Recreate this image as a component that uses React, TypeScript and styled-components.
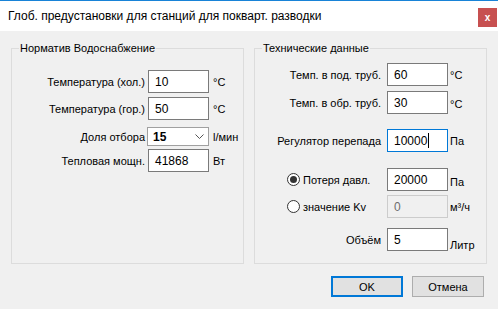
import styled, { createGlobalStyle } from 'styled-components'

const GlobalStyle = createGlobalStyle`
	html, body {
		margin: 0;
		padding: 0;
		background: #f0f0f0;
	}
	body {
		font-family: 'Liberation Sans', Arial, sans-serif;
		font-size: 11px;
		color: #000;
	}
`

const Window = styled.div`
	width: 498px;
	height: 309px;
	box-sizing: border-box;
	border-top: 1px solid #1883d7;
	background: #f0f0f0;
	display: flex;
	flex-direction: column;
	overflow: hidden;
`

const TitleBar = styled.div`
	height: 30px;
	flex: none;
	background: #fff;
	display: flex;
	align-items: flex-start;
	justify-content: space-between;
	padding: 0 1px 0 8px;
`

const Title = styled.span`
	font-size: 12px;
	line-height: 30px;
`

const CloseButton = styled.button`
	width: 19px;
	height: 19px;
	margin-top: 7px;
	padding: 0;
	border: none;
	background: #c75050;
	color: #fff;
	font: bold 10px 'Liberation Sans', Arial, sans-serif;
	line-height: 19px;
`

const Groups = styled.div`
	display: flex;
	gap: 10px;
	padding: 17px 0 0 11px;
`

const Group = styled.section`
	width: 233px;
	height: 216px;
	box-sizing: border-box;
	border: 1px solid #dcdcdc;
`

const Legend = styled.div`
	width: fit-content;
	margin: -7px 0 0 7px;
	padding: 0 1px;
	line-height: 13px;
	background: #f0f0f0;
`

type RowProps = {
	$top: number
	$label: number
	$labelGap: number
	$unitGap: number
}

const Row = styled.div<RowProps>`
	display: grid;
	grid-template-columns: ${(p) => p.$label}px 61px 1fr;
	align-items: center;
	margin-top: ${(p) => p.$top}px;
	> :first-child {
		padding-right: ${(p) => p.$labelGap}px;
	}
	> :last-child {
		padding-left: ${(p) => p.$unitGap}px;
	}
`

const Label = styled.span`
	text-align: right;
	white-space: nowrap;
`

// some units sit a few pixels under the middle of their box
const Unit = styled.span<{ $shift?: number }>`
	white-space: nowrap;
	margin-top: ${(p) => (p.$shift ?? 0) * 2}px;
`

const TextBox = styled.div<{ $focused?: boolean; $disabled?: boolean }>`
	height: 23px;
	box-sizing: border-box;
	display: flex;
	align-items: center;
	padding-left: 6px;
	font-size: 12px;
	background: ${(p) => (p.$disabled ? '#f0f0f0' : '#fff')};
	color: ${(p) => (p.$disabled ? '#6d6d6d' : '#000')};
	border: 1px solid
		${(p) => (p.$focused ? '#0078d7' : p.$disabled ? '#cccccc' : '#7a7a7a')};
`

const Caret = styled.span`
	width: 1px;
	height: 15px;
	margin-left: 1px;
	background: #000;
`

const Combo = styled.div`
	height: 19px;
	width: 62px;
	margin-left: -1px;
	box-sizing: border-box;
	display: flex;
	align-items: center;
	justify-content: space-between;
	padding: 0 4px 0 5px;
	background: #fff;
	border: 1px solid #a0a0a0;
	font-size: 12px;
	font-weight: bold;
`

const RadioOption = styled.label`
	display: flex;
	align-items: center;
	gap: 3px;
	padding-left: 32px;
	white-space: nowrap;
`

const RadioDot = styled.span<{ $checked?: boolean }>`
	width: 13px;
	height: 13px;
	box-sizing: border-box;
	border-radius: 50%;
	border: 1px solid #333;
	background: #fff;
	display: flex;
	align-items: center;
	justify-content: center;
	&::after {
		content: '';
		display: ${(p) => (p.$checked ? 'block' : 'none')};
		width: 7px;
		height: 7px;
		border-radius: 50%;
		background: #333;
	}
`

const ButtonRow = styled.div`
	display: flex;
	justify-content: flex-end;
	gap: 9px;
	margin-top: 12px;
	padding-right: 14px;
`

const DialogButton = styled.button<{ $primary?: boolean }>`
	width: 72px;
	height: 21px;
	box-sizing: border-box;
	padding: 0;
	background: #e1e1e1;
	border: ${(p) => (p.$primary ? '2px solid #0078d7' : '1px solid #adadad')};
	font: 11px 'Liberation Sans', Arial, sans-serif;
	color: #000;
`

const left = { $label: 136, $labelGap: 3, $unitGap: 4 }
const right = { $label: 132, $labelGap: 6, $unitGap: 2 }

const Chevron = () => (
	<svg width='9' height='5' viewBox='0 0 9 5'>
		<polyline points='0.5,0.5 4.5,4.5 8.5,0.5' fill='none' stroke='#555' strokeWidth='1' />
	</svg>
)

const App = () => (
	<Window>
		<GlobalStyle />
		<TitleBar>
			<Title>Глоб. предустановки для станций для покварт. разводки</Title>
			<CloseButton>x</CloseButton>
		</TitleBar>
		<Groups>
			<Group>
				<Legend>Норматив Водоснабжение</Legend>
				<Row {...left} $top={15}>
					<Label>Температура (хол.)</Label>
					<TextBox>10</TextBox>
					<Unit>°C</Unit>
				</Row>
				<Row {...left} $top={4}>
					<Label>Температура (гор.)</Label>
					<TextBox>50</TextBox>
					<Unit>°C</Unit>
				</Row>
				<Row {...left} $top={7}>
					<Label>Доля отбора</Label>
					<Combo>
						15
						<Chevron />
					</Combo>
					<Unit>l/мин</Unit>
				</Row>
				<Row {...left} $top={3}>
					<Label>Тепловая мощн.</Label>
					<TextBox>41868</TextBox>
					<Unit>Вт</Unit>
				</Row>
			</Group>
			<Group>
				<Legend>Технические данные</Legend>
				<Row {...right} $top={8}>
					<Label>Темп. в под. труб.</Label>
					<TextBox>60</TextBox>
					<Unit $shift={0.5}>°C</Unit>
				</Row>
				<Row {...right} $top={5}>
					<Label>Темп. в обр. труб.</Label>
					<TextBox>30</TextBox>
					<Unit $shift={1}>°C</Unit>
				</Row>
				<Row {...right} $top={15}>
					<Label>Регулятор перепада</Label>
					<TextBox $focused>
						10000
						<Caret />
					</TextBox>
					<Unit>Па</Unit>
				</Row>
				<Row {...right} $top={16}>
					<RadioOption>
						<RadioDot $checked />
						Потеря давл.
					</RadioOption>
					<TextBox>20000</TextBox>
					<Unit $shift={2}>Па</Unit>
				</Row>
				<Row {...right} $top={4}>
					<RadioOption>
						<RadioDot />
						значение Kv
					</RadioOption>
					<TextBox $disabled>0</TextBox>
					<Unit $shift={0.5}>м³/ч</Unit>
				</Row>
				<Row {...right} $top={10}>
					<Label>Объём</Label>
					<TextBox>5</TextBox>
					<Unit $shift={5}>Литр</Unit>
				</Row>
			</Group>
		</Groups>
		<ButtonRow>
			<DialogButton $primary>OK</DialogButton>
			<DialogButton>Отмена</DialogButton>
		</ButtonRow>
	</Window>
)

export default App
